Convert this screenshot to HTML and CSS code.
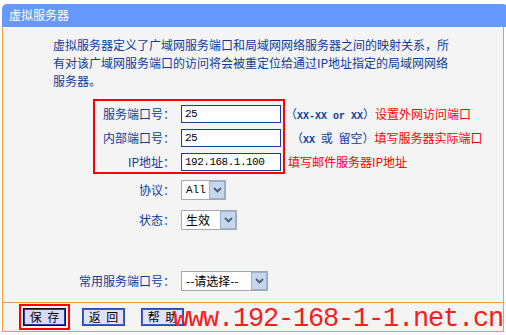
FILE: index.html
```html
<!DOCTYPE html>
<html lang="zh-CN">
<head>
    <meta charset="UTF-8">
    <title>虚拟服务器</title>
    <link rel="stylesheet" href="styles.css">
</head>
<body>
    <div class="frame">
        <div class="title">虚拟服务器</div>
        <div class="panel">
            <div class="content">
                <p class="desc">虚拟服务器定义了广域网服务端口和局域网网络服务器之间的映射关系，所有对该广域网服务端口的访问将会被重定位给通过IP地址指定的局域网网络服务器。</p>

                <div class="ports">
                    <div class="mark-box">
                        <label>服务端口号：</label>
                        <input type="text" class="text" value="25">
                        <label>内部端口号：</label>
                        <input type="text" class="text" value="25">
                        <label>IP地址：</label>
                        <input type="text" class="text" value="192.168.1.100">
                    </div>
                    <div class="notes">
                        <div class="note"><span class="hint">（<span class="half">XX-XX or XX</span>）</span><span class="red">设置外网访问端口</span></div>
                        <div class="note indent"><span class="hint">（<span class="half">XX</span> 或 留空）</span><span class="red">填写服务器实际端口</span></div>
                        <div class="note last"><span class="red">填写邮件服务器IP地址</span></div>
                    </div>
                </div>

                <div class="form">
                    <label>协议：</label>
                    <span class="select w-proto"><span class="val half">All</span><span class="arrow"><svg width="9" height="6" viewBox="0 0 9 6"><path d="M1 1l3.5 3.5L8 1" fill="none" stroke="#4b5b74" stroke-width="1.8"/></svg></span></span>
                    <label>状态：</label>
                    <span class="select w-state"><span class="val">生效</span><span class="arrow"><svg width="9" height="6" viewBox="0 0 9 6"><path d="M1 1l3.5 3.5L8 1" fill="none" stroke="#4b5b74" stroke-width="1.8"/></svg></span></span>
                </div>

                <div class="form common">
                    <label>常用服务端口号：</label>
                    <span class="select w-common"><span class="val">--请选择--</span><span class="arrow"><svg width="9" height="6" viewBox="0 0 9 6"><path d="M1 1l3.5 3.5L8 1" fill="none" stroke="#4b5b74" stroke-width="1.8"/></svg></span></span>
                </div>
            </div>

            <div class="footer">
                <button class="btn default">保 存</button>
                <button class="btn">返 回</button>
                <button class="btn">帮 助</button>
                <div class="watermark">www.192-168-1-1.net.cn</div>
            </div>
        </div>
    </div>
</body>
</html>
```

FILE: styles.css
```css
* {
    margin: 0;
    padding: 0;
    box-sizing: border-box;
}

html, body {
    overflow: hidden;
}

body {
    background: #fff;
    color: #0f3a98;
    font-family: "Noto Sans CJK SC", sans-serif;
    font-size: 12px;
}

.frame {
    margin: 4px 0 0 2px;
    width: 506px;
}

.title {
    height: 23px;
    line-height: 22px;
    padding-left: 7px;
    background: #6699ff;
    color: #fff;
    border-radius: 5px 5px 0 0;
}

.panel {
    width: 502px;
    background: #f4f4f4;
    border: 1px solid #f99b3c;
    border-top: none;
}

.content {
    height: 275px;
    padding-top: 9px;
}

.desc {
    margin-left: 50px;
    width: 400px;
    line-height: 18px;
}

.half {
    font-family: "Liberation Mono", monospace;
    font-size: 10px;
}

/* port rows */
.ports {
    display: flex;
    margin: 9px 0 0 90px;
}

.mark-box {
    display: grid;
    grid-template-columns: 80px 100px;
    column-gap: 6px;
    row-gap: 6px;
    padding: 4px 2px 1px 0;
    border: 2px solid #f00;
}

.mark-box label,
.form label {
    text-align: right;
    line-height: 18px;
}

.text {
    width: 100px;
    height: 18px;
    padding: 0 3px;
    border: 1px solid #1c3f96;
    background: #fff;
    color: #000;
    font-family: "Liberation Mono", monospace;
    font-size: 11px;
    letter-spacing: -0.5px;
}

.notes {
    display: flex;
    flex-direction: column;
    gap: 6px;
    padding-top: 6px;
}

.note {
    height: 18px;
    line-height: 18px;
    white-space: nowrap;
}

.hint .half {
    font-weight: bold;
}

.note.indent {
    padding-left: 6px;
    word-spacing: 3px;
}

.note.last {
    padding-left: 3px;
}

.red {
    color: #f00;
}

/* selects */
.form {
    display: grid;
    grid-template-columns: 172px auto;
    justify-content: start;
    column-gap: 6px;
    row-gap: 10px;
    margin-top: 6px;
}

.form label {
    line-height: 20px;
}

.form.common {
    margin-top: 41px;
}

.select {
    display: flex;
    height: 20px;
    border: 1px solid #a3a9b2;
    background: #fff;
    color: #000;
}

.select .val {
    flex: 1;
    padding-left: 4px;
    line-height: 18px;
    white-space: nowrap;
}

.select .val.half {
    font-size: 11px;
}

.select .arrow {
    display: flex;
    align-items: center;
    justify-content: center;
    width: 16px;
    border: 1px solid #9db0cc;
    background: #c5d7ee;
}

.w-proto { width: 45px; }
.w-state { width: 56px; }
.w-common { width: 87px; }

/* footer */
.footer {
    position: relative;
    display: flex;
    gap: 16px;
    height: 29px;
    padding: 5px 0 0 20px;
    border-top: 1px solid #f99b3c;
}

.btn {
    width: 43px;
    height: 18px;
    border: 1px solid #2b4cb0;
    box-shadow: inset 0 0 0 1px #3b5cc0;
    background: #dfe2fb;
    color: #000;
    font-family: "Noto Sans CJK SC", sans-serif;
    font-size: 12px;
    line-height: 14px;
    word-spacing: 3px;
}

.btn.default {
    border-color: #111;
    box-shadow: inset 0 0 0 1px #2b3f9a;
    background: #d8dbff;
    outline: 2px solid #f00;
    outline-offset: 2px;
}

.watermark {
    position: absolute;
    left: 170px;
    top: 3px;
    color: #f42020;
    font-family: "Liberation Mono", monospace;
    font-size: 27px;
    line-height: 27px;
    letter-spacing: -1.2px;
    white-space: nowrap;
}
```
